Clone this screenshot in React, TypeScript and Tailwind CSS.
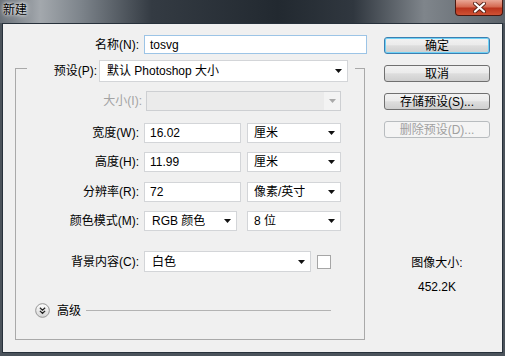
import type { ReactNode } from "react";

const font = "font-[family-name:'Liberation_Sans','Noto_Sans_CJK_SC',sans-serif]";

function Arrow({ muted = false }: { muted?: boolean }) {
  return (
    <svg width="7" height="4" viewBox="0 0 7 4" className="shrink-0">
      <path d="M0 0H7L3.5 4Z" fill={muted ? "#a9a9a9" : "#111"} />
    </svg>
  );
}

function Select({ className = "", children }: { className?: string; children?: ReactNode }) {
  return (
    <div
      className={`flex items-center justify-between border border-[#d3d5d8] bg-white pl-[6px] pr-[5px] ${className}`}
    >
      <span className="truncate">{children}</span>
      <Arrow />
    </div>
  );
}

function Field({ className = "", children }: { className?: string; children: ReactNode }) {
  return (
    <div className={`flex items-center border border-[#d3d5d8] bg-white pl-[5px] ${className}`}>
      {children}
    </div>
  );
}

function Button({
  children,
  primary = false,
  disabled = false,
}: {
  children: ReactNode;
  primary?: boolean;
  disabled?: boolean;
}) {
  let tone =
    "border-[#707070] bg-[linear-gradient(180deg,#f2f2f2_0%,#ebebeb_45%,#dddddd_52%,#cfcfcf_100%)]";
  if (primary)
    tone =
      "border-[#3c7fb1] shadow-[inset_0_0_0_1px_#6fd2f6] bg-[linear-gradient(180deg,#f2f2f2_0%,#ebebeb_45%,#dddddd_52%,#cfcfcf_100%)]";
  if (disabled) tone = "border-[#b8bcbf] bg-[#f4f4f4] text-[#a0a0a0]";
  return (
    <div
      className={`flex h-[17px] w-[106px] items-center justify-center rounded-[3px] border ${tone}`}
    >
      {children}
    </div>
  );
}

function Row({
  label,
  className = "",
  children,
}: {
  label: string;
  className?: string;
  children: ReactNode;
}) {
  return (
    <div className={`flex h-[20px] items-center ${className}`}>
      <span className="w-[123px] text-right">{label}</span>
      <div className="ml-[5px] flex items-center">{children}</div>
    </div>
  );
}

export default function App() {
  return (
    <div
      className={`flex h-[356px] w-[505px] flex-col bg-[#4b535b] text-[12px] leading-[16px] text-black ${font}`}
    >
      {/* title bar */}
      <div className="flex h-[23px] items-start justify-between bg-[linear-gradient(90deg,#6a7179_0%,#a3a8ad_8%,#7d848b_16%,#343b43_30%,#222930_55%,#30373f_70%,#7f858b_84%,#5c636a_100%)]">
        <span className="pl-[3px] pt-[2px] text-[12px] [text-shadow:0_0_6px_#ffffff,0_0_3px_#ffffff]">
          新建
        </span>
        <div className="mr-[2px] flex h-[16px] w-[48px] items-center justify-center rounded-b-[4px] border border-t-0 border-[#4a1810] bg-[linear-gradient(180deg,#e9a796_0%,#d56a52_45%,#bb341d_55%,#cf5234_100%)]">
          <svg width="13" height="11" viewBox="0 0 13 11">
            <path d="M2 1.5L11 9.5M11 1.5L2 9.5" stroke="#5a2418" strokeWidth="4" strokeLinecap="round" />
            <path d="M2 1.5L11 9.5M11 1.5L2 9.5" stroke="#ffffff" strokeWidth="2.2" strokeLinecap="round" />
          </svg>
        </div>
      </div>

      {/* body */}
      <div className="mx-[2px] mb-[3px] flex flex-1 border border-[#27313b] bg-[#f0f0f0] pl-[12px] pt-[11px]">
        {/* left column */}
        <div className="flex w-[352px] flex-col">
          <div className="flex h-[19px] items-center">
            <span className="w-[124px] text-right">名称(N):</span>
            <div className="ml-[5px] flex h-[19px] w-[223px] items-center border border-[#9cc4e6] bg-white pl-[5px]">
              tosvg
            </div>
          </div>

          <div className="mt-[14px] flex h-[272px] w-[350px] flex-col border border-[#a9a9a9]">
            <div className="ml-[11px] mt-[-9px] flex h-[22px] w-[328px] items-center bg-[#f0f0f0] pr-[7px]">
              <span className="w-[70px] text-right">预设(P):</span>
              <Select className="ml-[2px] h-[22px] w-[249px] pl-[7px]">默认 Photoshop 大小</Select>
            </div>

            <div className="mt-[9px] flex h-[20px] items-center">
              <span className="w-[126px] text-right text-[#a3a3a3]">大小(I):</span>
              <div className="ml-[4px] flex h-[20px] w-[195px] items-stretch border border-[#cdcfd2] bg-[#ebebeb]">
                <div className="flex-1" />
                <div className="flex w-[16px] items-center justify-center bg-[#f3f3f3]">
                  <Arrow muted />
                </div>
              </div>
            </div>

            <Row label="宽度(W):" className="mt-[12px]">
              <Field className="h-[20px] w-[97px]">16.02</Field>
              <Select className="ml-[6px] h-[20px] w-[94px]">厘米</Select>
            </Row>
            <Row label="高度(H):" className="mt-[9px]">
              <Field className="h-[20px] w-[97px]">11.99</Field>
              <Select className="ml-[6px] h-[20px] w-[94px]">厘米</Select>
            </Row>
            <Row label="分辨率(R):" className="mt-[10px]">
              <Field className="h-[20px] w-[97px]">72</Field>
              <Select className="ml-[6px] h-[20px] w-[94px]">像素/英寸</Select>
            </Row>
            <Row label="颜色模式(M):" className="mt-[9px]">
              <Select className="h-[20px] w-[93px] pl-[7px]">RGB 颜色</Select>
              <Select className="ml-[10px] h-[20px] w-[94px]">8 位</Select>
            </Row>
            <div className="mt-[20px] flex h-[21px] items-center">
              <span className="w-[123px] text-right">背景内容(C):</span>
              <Select className="ml-[5px] h-[21px] w-[167px] pl-[7px]">白色</Select>
              <div className="ml-[6px] h-[14px] w-[14px] border border-[#a6a6a6] bg-white" />
            </div>

            <div className="ml-[19px] mt-[31px] flex h-[15px] items-center">
              <svg width="15" height="15" viewBox="0 0 16 16">
                <defs>
                  <linearGradient id="adv" x1="0" y1="0" x2="0" y2="1">
                    <stop offset="0" stopColor="#ffffff" />
                    <stop offset="1" stopColor="#d4d4d4" />
                  </linearGradient>
                </defs>
                <circle cx="8" cy="8" r="7.3" fill="url(#adv)" stroke="#8e8e8e" />
                <path d="M5.2 5L8 7.6L10.8 5M5.2 8.4L8 11L10.8 8.4" fill="none" stroke="#222" strokeWidth="1.3" />
              </svg>
              <span className="ml-[7px]">高级</span>
              <div className="ml-[5px] h-px w-[245px] bg-[#b3b3b3]" />
            </div>
          </div>
        </div>

        {/* right column */}
        <div className="ml-[17px] mt-[2px] flex w-[106px] flex-col items-center">
          <div className="flex flex-col gap-[11px]">
            <Button primary>确定</Button>
            <Button>取消</Button>
            <Button>存储预设(S)...</Button>
            <Button disabled>删除预设(D)...</Button>
          </div>
          <div className="mt-[117px]">图像大小:</div>
          <div className="mt-[8px]">452.2K</div>
        </div>
      </div>
    </div>
  );
}
